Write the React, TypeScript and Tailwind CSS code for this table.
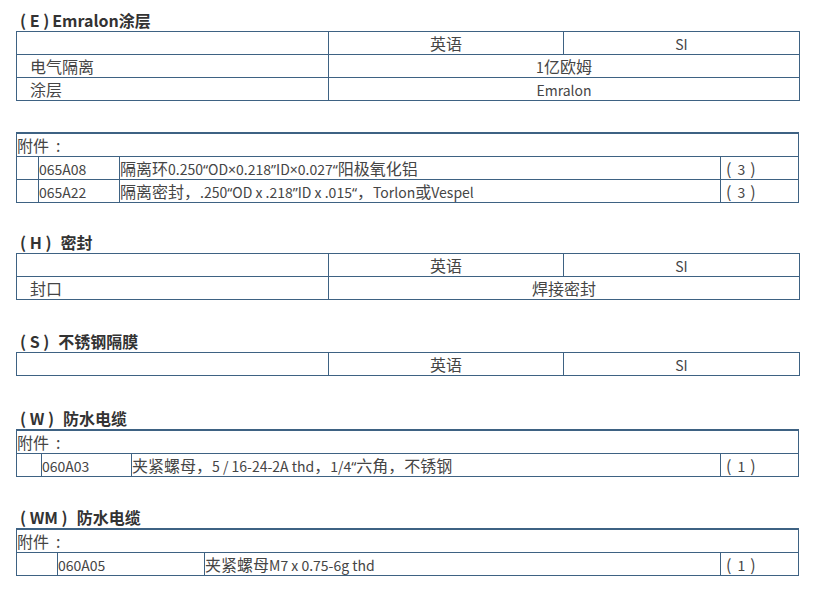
import React from 'react';

const FONT = { fontFamily: '"Noto Sans CJK SC", "Noto Sans", sans-serif' };

const cell = 'border border-[#3e6283] h-[23px] p-0 leading-[22px] text-[16px] text-[#454545] align-middle';

// Latin runs are set a little smaller than the CJK text; quotes and × stay narrow
function Txt({ s }: { s: string }) {
  const parts = s.split(/([\u3000-\u9fff\uff00-\uffef]+|[“”×])/).filter(Boolean);
  return (
    <>
      {parts.map((p, i) => {
        if (/^[\u3000-\u9fff\uff00-\uffef]+$/.test(p)) return <React.Fragment key={i}>{p}</React.Fragment>;
        if (/^[“”×]$/.test(p))
          return (
            <span key={i} className="text-[14px] leading-none" style={{ fontFamily: '"Noto Sans", sans-serif' }}>
              {p}
            </span>
          );
        return (
          <span key={i} className="text-[14px] leading-none">
            {p}
          </span>
        );
      })}
    </>
  );
}

function Heading({ code, title, latin = false }: { code: string; title: string; latin?: boolean }) {
  return (
    <h3 className="pl-[4px] text-[16px] font-bold leading-[22px] text-[#333] whitespace-nowrap">
      <span>( {code} )</span>
      <span className={latin ? 'ml-[3px]' : 'ml-[9px]'}>{title}</span>
    </h3>
  );
}

function Qty({ n }: { n: number }) {
  return (
    <span className="pl-[5px]">
      (<span className="ml-[6px] mr-[5px] text-[14px] leading-none">{n}</span>)
    </span>
  );
}

function SpecTable({ rows }: { rows: [string, string][] }) {
  return (
    <table className="w-[783px] table-fixed border-collapse">
      <colgroup>
        <col className="w-[312px]" />
        <col className="w-[235px]" />
        <col className="w-[236px]" />
      </colgroup>
      <tbody>
        <tr>
          <td className={cell}></td>
          <td className={`${cell} text-center`}>英语</td>
          <td className={`${cell} text-center`}>
            <Txt s="SI" />
          </td>
        </tr>
        {rows.map(([label, value]) => (
          <tr key={label}>
            <td className={`${cell} pl-[13px]`}>
              <Txt s={label} />
            </td>
            <td className={`${cell} text-center`} colSpan={2}>
              <Txt s={value} />
            </td>
          </tr>
        ))}
      </tbody>
    </table>
  );
}

interface Part {
  code: string;
  desc: string;
  qty: number;
}

function PartsTable({ widths, parts }: { widths: [number, number]; parts: Part[] }) {
  const [a, b] = widths;
  return (
    <table className="w-[783px] table-fixed border-collapse">
      <colgroup>
        <col style={{ width: a }} />
        <col style={{ width: b }} />
        <col />
        <col className="w-[78px]" />
      </colgroup>
      <tbody>
        <tr>
          <td className={`${cell} border-t-2`} colSpan={4}>
            附件<span className="ml-[7px]">:</span>
          </td>
        </tr>
        {parts.map((p) => (
          <tr key={p.code}>
            <td className={cell}></td>
            <td className={cell}>
              <Txt s={p.code} />
            </td>
            <td className={`${cell} whitespace-nowrap`}>
              <Txt s={p.desc} />
            </td>
            <td className={cell}>
              <Qty n={p.qty} />
            </td>
          </tr>
        ))}
      </tbody>
    </table>
  );
}

export default function App() {
  return (
    <div className="w-[814px] min-h-[592px] bg-white px-[16px] pt-[9px]" style={FONT}>
      <Heading code="E" title="Emralon涂层" latin />
      <SpecTable
        rows={[
          ['电气隔离', '1亿欧姆'],
          ['涂层', 'Emralon'],
        ]}
      />

      <div className="mt-[31px]">
        <PartsTable
          widths={[22, 81]}
          parts={[
            { code: '065A08', desc: '隔离环0.250“OD×0.218”ID×0.027“阳极氧化铝', qty: 3 },
            { code: '065A22', desc: '隔离密封，.250“OD x .218”ID x .015“，Torlon或Vespel', qty: 3 },
          ]}
        />
      </div>

      <div className="mt-[28px]">
        <Heading code="H" title="密封" />
        <SpecTable rows={[['封口', '焊接密封']]} />
      </div>

      <div className="mt-[30px]">
        <Heading code="S" title="不锈钢隔膜" />
        <SpecTable rows={[]} />
      </div>

      <div className="mt-[31px]">
        <Heading code="W" title="防水电缆" />
        <PartsTable
          widths={[25, 90]}
          parts={[{ code: '060A03', desc: '夹紧螺母，5 / 16-24-2A thd，1/4“六角，不锈钢', qty: 1 }]}
        />
      </div>

      <div className="mt-[29px]">
        <Heading code="WM" title="防水电缆" />
        <PartsTable
          widths={[41, 147]}
          parts={[{ code: '060A05', desc: '夹紧螺母M7 x 0.75-6g thd', qty: 1 }]}
        />
      </div>
    </div>
  );
}
